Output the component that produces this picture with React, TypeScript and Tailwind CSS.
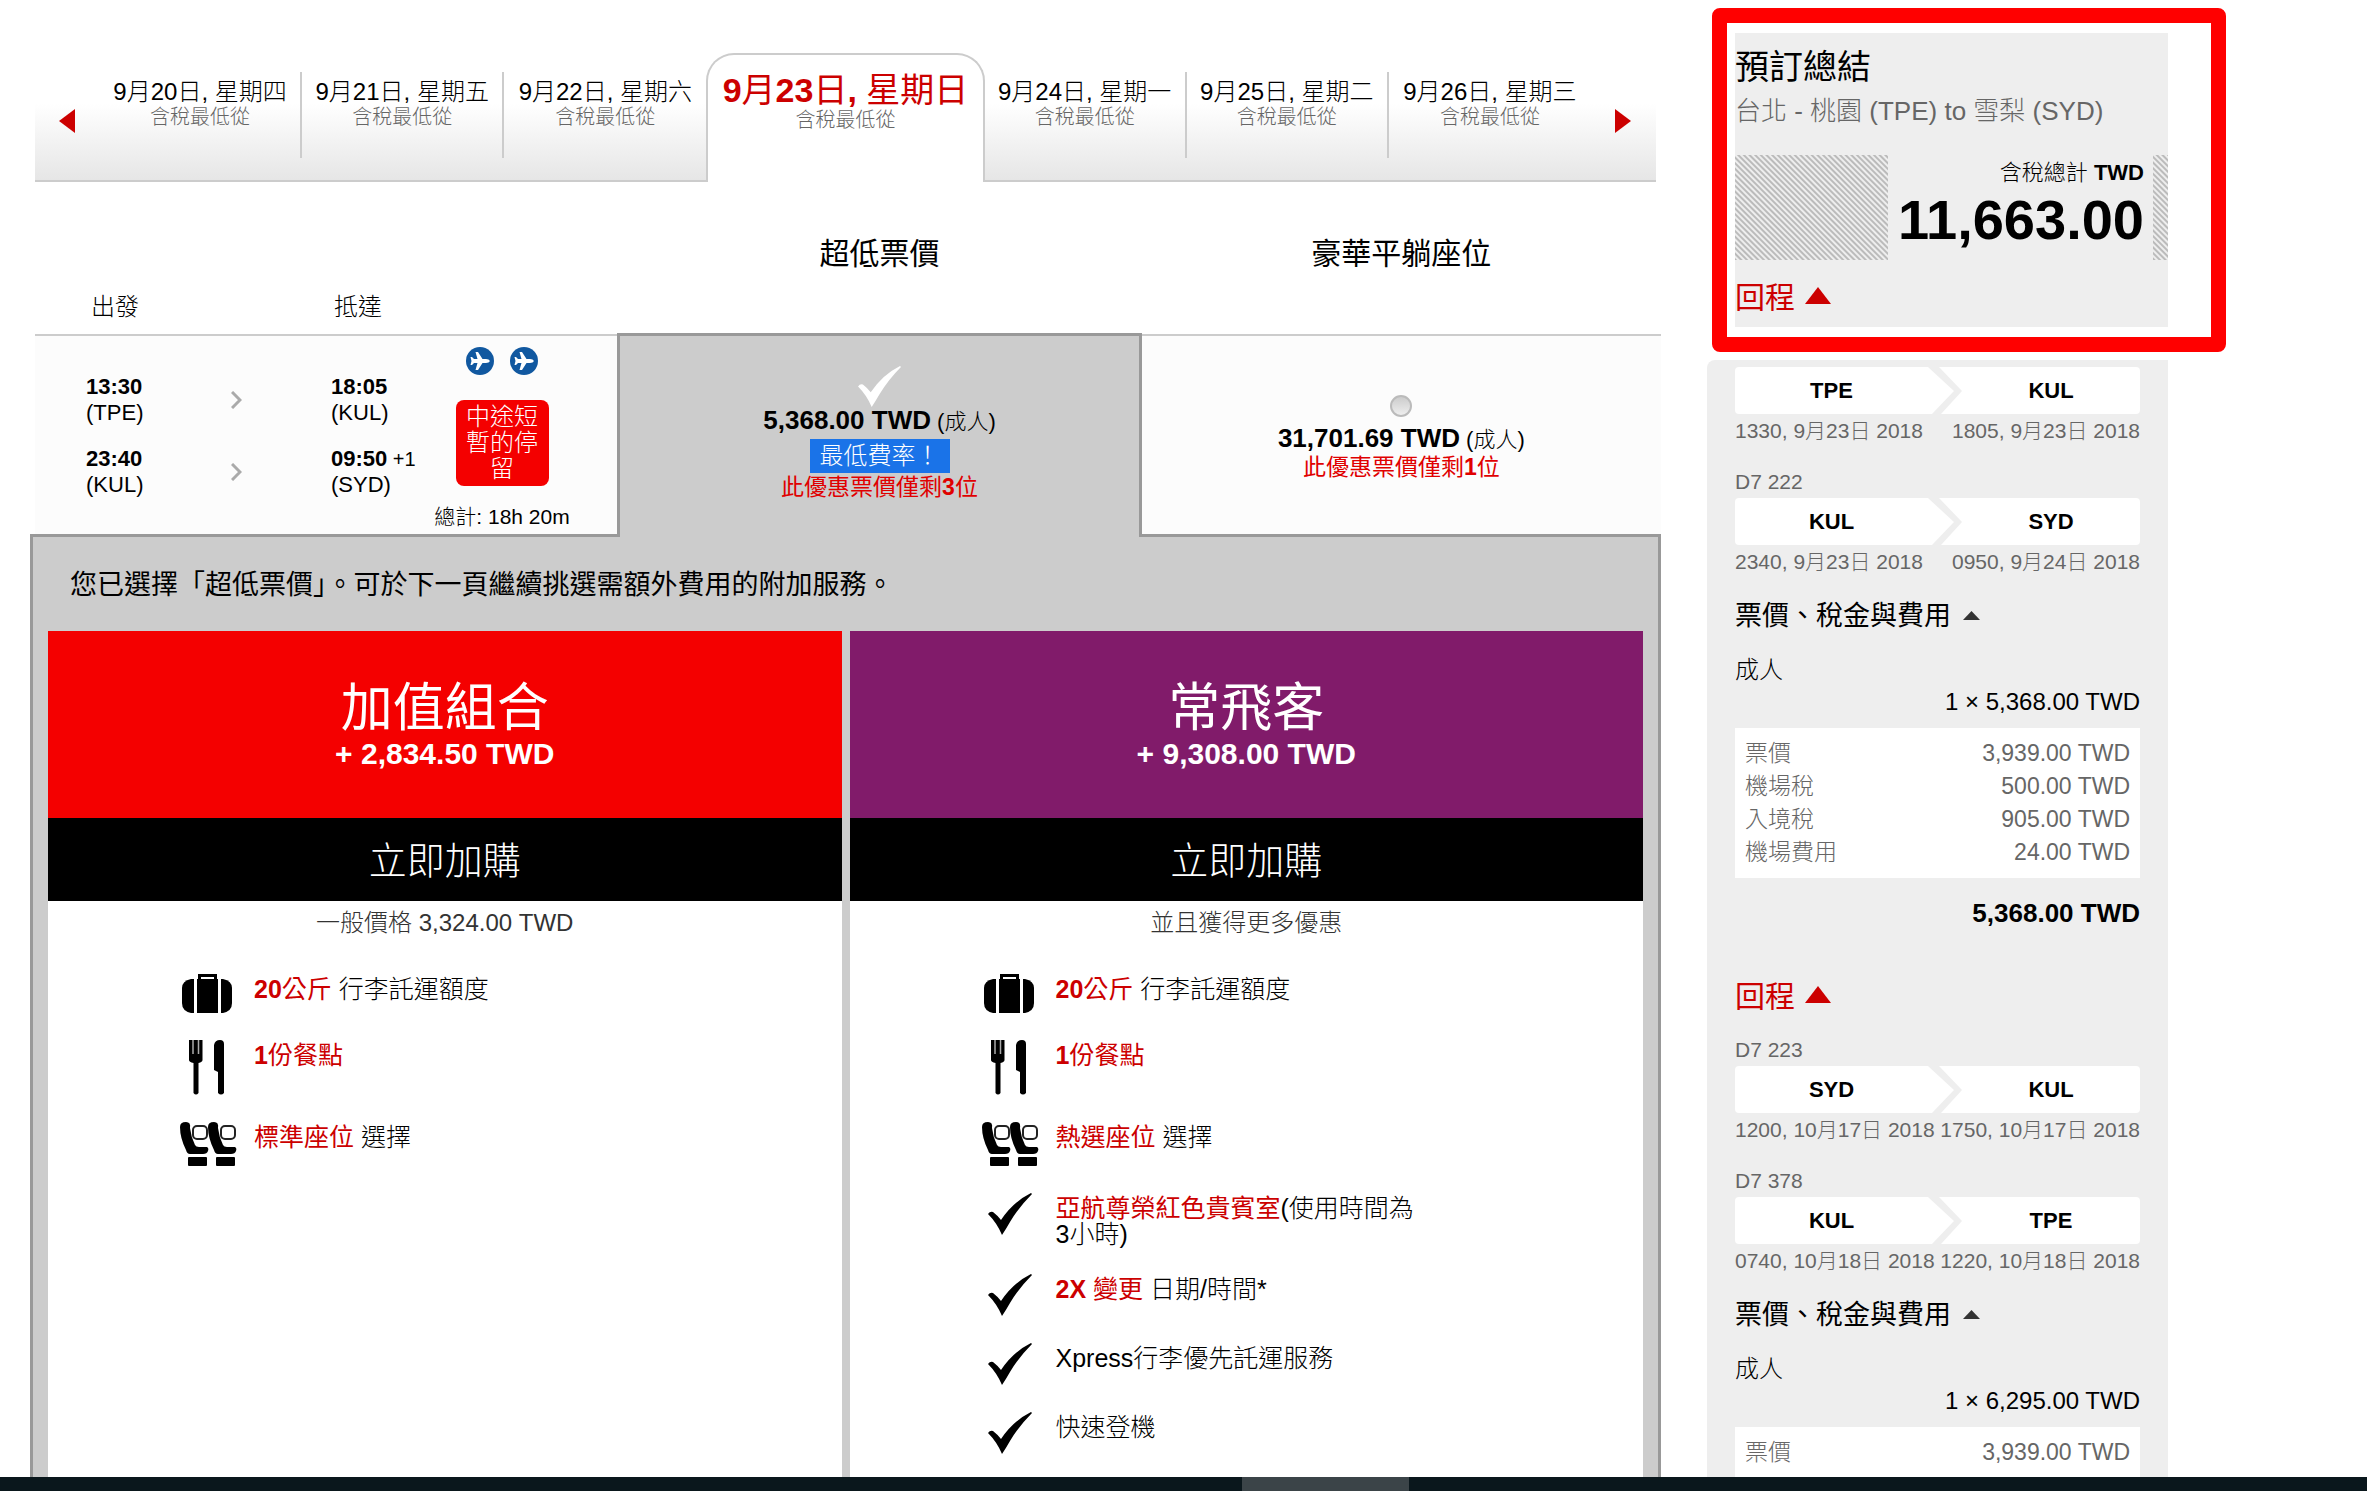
import React, { ReactElement, ReactNode, useState } from 'react'

interface DateTab {
  digits: [string, string]
  weekday: string
}

const dates: DateTab[] = [
  { digits: ['9', '20'], weekday: '星期四' },
  { digits: ['9', '21'], weekday: '星期五' },
  { digits: ['9', '22'], weekday: '星期六' },
  { digits: ['9', '23'], weekday: '星期日' },
  { digits: ['9', '24'], weekday: '星期一' },
  { digits: ['9', '25'], weekday: '星期二' },
  { digits: ['9', '26'], weekday: '星期三' },
]

function CheckIcon({ className }: { className: string }): ReactElement {
  return (
    <svg viewBox="0 0 44 42" className={className} aria-hidden="true">
      <path
        d="M0 21 Q2 18 5 19 Q9 22 13 27 Q25 9 43 0 L44 1 Q31 14 22 29 Q18 36 14 42 Q9 30 0 21 Z"
        fill="currentColor"
      />
    </svg>
  )
}

function LuggageIcon(): ReactElement {
  return (
    <svg viewBox="0 0 50 39" className="h-[39px] w-[50px]" aria-hidden="true">
      <path d="M17.5 6 V1.5 H33.5 V6" fill="none" stroke="#000" strokeWidth="3" />
      <rect x="15" y="5" width="21" height="34" />
      <path d="M12 5 V39 H9 Q0 37 0 29 V14 Q0 7 9 5 Z" />
      <path d="M39 5 V39 H41 Q50 37 50 29 V14 Q50 7 41 5 Z" />
    </svg>
  )
}

function MealIcon(): ReactElement {
  return (
    <svg viewBox="0 0 50 55" className="h-[55px] w-[50px]" aria-hidden="true">
      <path d="M7 0 H20.500 V20 Q20.500 22 16.500 23 V53 Q14 56 11.500 53 V23 Q7 22 7 20 Z" />
      <path d="M11 0 V14 M16.500 0 V14" stroke="#aaa" strokeWidth="1.500" />
      <path d="M32 30 V5 Q33 0 38 0 Q42 0 42 4 V53 Q39 56 36 53 V32 Z" />
    </svg>
  )
}

function SeatShape({ x }: { x: number }): ReactElement {
  return (
    <g transform={`translate(${x} 0)`}>
      <path d="M0 5 Q0 0 6 0 Q11 0 10 6 Q11 15 15 23 Q16 25 19 25 H27 Q29 26 28 29 Q27 32 23 32 H10 Q7 32 6 28 Q0 16 0 5 Z" />
      <rect x="13" y="4" width="14" height="13" rx="4" fill="none" stroke="#222" strokeWidth="2" />
      <rect x="8" y="35" width="19" height="9" rx="1" />
    </g>
  )
}

function SeatIcon(): ReactElement {
  return (
    <svg viewBox="0 0 57 44" className="-ml-0.5 h-[44px] w-[57px]" aria-hidden="true">
      <SeatShape x={0} />
      <SeatShape x={28} />
    </svg>
  )
}

function PlaneIcon(): ReactElement {
  return (
    <svg viewBox="0 0 28 28" className="size-7" aria-hidden="true">
      <circle cx="14" cy="14" r="14" fill="#1158a0" />
      <path
        d="M24 14 Q23 12 20 12 H16.500 L12 5 H9.500 L11.500 12 H8 L6 10 H4.500 L5.500 14 L4.500 18 H6 L8 16 H11.500 L9.500 23 H12 L16.500 16 H20 Q23 16 24 14 Z"
        fill="#fff"
      />
    </svg>
  )
}

function Triangle({ className }: { className: string }): ReactElement {
  return (
    <svg viewBox="0 0 26 17" preserveAspectRatio="none" className={className} aria-hidden="true">
      <path d="M13 0 L26 17 H0 Z" fill="currentColor" />
    </svg>
  )
}

function DateBar(): ReactElement {
  const active = 3
  const gradient = 'border-b-2 border-[#ccc] bg-linear-to-b from-white from-40% to-[#e6e6e6]'
  return (
    <nav className="mx-[5px] grid h-[129px] grid-cols-[65px_202fr_202fr_202fr_278fr_202fr_202fr_202fr_65px]">
      <button className={`flex items-center pt-2 pl-6 ${gradient}`} aria-label="前一天">
        <svg viewBox="0 0 16 24" className="h-6 w-4">
          <path d="M16 0 V24 L0 12 Z" fill="#c00" />
        </svg>
      </button>
      {dates.map((d: DateTab, i: number) =>
        i === active ? (
          <button
            key={d.weekday}
            className="flex flex-col items-center rounded-t-[28px] border-x-2 border-t-2 border-[#ccc] bg-white pt-[15px] whitespace-nowrap"
          >
            <span className="text-[34px] leading-[40px] text-[#c00]">
              <b>{d.digits[0]}</b>月<b>{d.digits[1]}</b>日<b>,</b> {d.weekday}
            </span>
            <span className="text-[20px] leading-[20px] font-light text-[#666]">含稅最低從</span>
          </button>
        ) : (
          <button
            key={d.weekday}
            className={`flex flex-col items-stretch pt-[19px] whitespace-nowrap ${gradient}`}
          >
            <span
              className={`flex h-[86px] flex-col items-center pt-1.5 font-light ${
                i === active - 1 || i === dates.length - 1 ? '' : 'border-r-2 border-[#ccc]'
              }`}
            >
              <span className="text-[24px] leading-[28px]">
                {d.digits[0]}月{d.digits[1]}日, {d.weekday}
              </span>
              <span className="text-[20px] leading-[22px] text-[#666]">含稅最低從</span>
            </span>
          </button>
        )
      )}
      <button className={`flex items-center pt-2 pl-6 ${gradient}`} aria-label="後一天">
        <svg viewBox="0 0 16 24" className="h-6 w-4">
          <path d="M0 0 V24 L16 12 Z" fill="#c00" />
        </svg>
      </button>
    </nav>
  )
}

interface StopProps {
  time: string
  airport: string
  nextDay?: boolean
}
function Stop({ time, airport, nextDay }: StopProps): ReactElement {
  return (
    <div className="text-[22px] leading-[26px] whitespace-nowrap">
      <b>{time}</b>
      {nextDay && <span className="text-[20px]"> +1</span>}
      <div>({airport})</div>
    </div>
  )
}

function Chevron(): ReactElement {
  return (
    <svg viewBox="0 0 11 18" className="h-[18px] w-[11px]" aria-hidden="true">
      <path d="M1 1 L9 9 L1 17" fill="none" stroke="#aaa" strokeWidth="3" />
    </svg>
  )
}

interface FareProps {
  price: string
  seats: number
  lowest?: boolean
  checked: boolean
  onSelect: () => void
}
function Fare({ price, seats, lowest, checked, onSelect }: FareProps): ReactElement {
  return (
    <label
      className={`relative flex flex-col items-center ${
        checked
          ? 'z-10 -mb-[3px] border-x-3 border-t-3 border-[#999] bg-[#ccc] pt-[30px]'
          : 'mt-px border-t-2 border-[#ccc] bg-[#fcfcfc] pt-[59px]'
      }`}
    >
      <input
        type="radio"
        name="fare"
        checked={checked}
        onChange={onSelect}
        className={
          checked
            ? 'sr-only'
            : 'mb-2 size-[22px] appearance-none rounded-full border-2 border-[#bbb] bg-linear-to-b from-[#ccc] to-[#eee]'
        }
      />
      {checked && <CheckIcon className="h-[41px] w-[43px] text-white" />}
      <span className="text-[22px] leading-[26px] font-light">
        <b className="text-[26px] font-bold">{price} TWD</b> (成人)
      </span>
      {lowest && (
        <span className="mt-1 bg-[#1a73e8] px-2.5 text-[24px] leading-[34px] font-light text-white">
          最低費率！
        </span>
      )}
      <span className="mt-px text-[23px] leading-[26px] text-[#e00000]">
        此優惠票價僅剩<b>{seats}</b>位
      </span>
    </label>
  )
}

function Flights(): ReactElement {
  const [fare, setFare] = useState<string>('low')
  return (
    <div>
      <div className="grid h-[151px] grid-cols-[587fr_524fr_519fr]">
        <div className="flex items-end pb-3 pl-[61px] text-[24px] leading-[28px] font-light">
          <span className="w-[243px]">出發</span>
          <span>抵達</span>
        </div>
        <h2 className="pt-[52px] text-center text-[30px] leading-[40px]">超低票價</h2>
        <h2 className="pt-[52px] text-center text-[30px] leading-[40px]">豪華平躺座位</h2>
      </div>
      <div className="grid h-[201px] grid-cols-[587fr_524fr_519fr]">
        <div className="mt-px ml-[5px] flex border-t-2 border-[#ccc] bg-[#fcfcfc] pl-[51px]">
          <div className="grid h-fit grid-cols-[145px_100px_110px] items-center gap-y-5 pt-[38px]">
            <Stop time="13:30" airport="TPE" />
            <Chevron />
            <Stop time="18:05" airport="KUL" />
            <Stop time="23:40" airport="KUL" />
            <Chevron />
            <Stop time="09:50" airport="SYD" nextDay />
          </div>
          <div className="flex w-[122px] flex-col items-center pt-[11px]">
            <div className="flex gap-4">
              <PlaneIcon />
              <PlaneIcon />
            </div>
            <div className="mt-[25px] w-[93px] rounded-lg bg-[#f40000] px-2.5 py-1 text-center text-[24px] leading-[26px] font-light text-white">
              中途短暫的停留
            </div>
            <div className="mt-[18px] text-[21px] leading-[26px] font-light whitespace-nowrap">
              總計: 18h 20m
            </div>
          </div>
        </div>
        <Fare
          price="5,368.00"
          seats={3}
          lowest
          checked={fare === 'low'}
          onSelect={() => setFare('low')}
        />
        <Fare
          price="31,701.69"
          seats={1}
          checked={fare === 'premium'}
          onSelect={() => setFare('premium')}
        />
      </div>
    </div>
  )
}

interface BundleProps {
  title: string
  price: string
  color: string
  note: string
  children: ReactNode
}
function Bundle({ title, price, color, note, children }: BundleProps): ReactElement {
  return (
    <section className="flex-1 bg-white">
      <div className={`h-[187px] pt-[49px] text-center text-white ${color}`}>
        <h3 className="text-[52px] leading-[56px]">{title}</h3>
        <div className="text-[30px] leading-[36px] font-bold">+ {price} TWD</div>
      </div>
      <button className="h-[83px] w-full bg-black pt-0.5 text-[38px] leading-[48px] font-light text-white">
        立即加購
      </button>
      <p className="pt-2 text-center text-[24px] leading-[28px] font-light text-[#333]">{note}</p>
      <ul className="mt-[37px] flex flex-col gap-[27px] pl-[134px]">{children}</ul>
    </section>
  )
}

function Perk({ icon, children }: { icon: ReactNode; children: ReactNode }): ReactElement {
  return (
    <li className="flex items-start">
      <div className="w-[72px] shrink-0">{icon}</div>
      <div className="w-[368px] pt-0.5 text-[25px] leading-[26px] font-light">{children}</div>
    </li>
  )
}

function Red({ children }: { children: ReactNode }): ReactElement {
  return <span className="font-normal text-[#c00]">{children}</span>
}

function Bundles(): ReactElement {
  const check = <CheckIcon className="ml-1 h-[42px] w-[44px] text-black" />
  return (
    <div className="flex flex-1 flex-col border-3 border-b-0 border-[#999] bg-[#ccc] px-[15px]">
      <p className="pt-7 pb-[26px] pl-[22px] text-[27px] leading-[40px]">
        您已選擇「超低票價」。可於下一頁繼續挑選需額外費用的附加服務。
      </p>
      <div className="flex flex-1 gap-2">
        <Bundle title="加值組合" price="2,834.50" color="bg-[#f40000]" note="一般價格 3,324.00 TWD">
          <Perk icon={<LuggageIcon />}>
            <Red>
              <b>20</b>公斤
            </Red>{' '}
            行李託運額度
          </Perk>
          <Perk icon={<MealIcon />}>
            <Red>
              <b>1</b>份餐點
            </Red>
          </Perk>
          <Perk icon={<SeatIcon />}>
            <Red>標準座位</Red> 選擇
          </Perk>
        </Bundle>
        <Bundle title="常飛客" price="9,308.00" color="bg-[#811b6a]" note="並且獲得更多優惠">
          <Perk icon={<LuggageIcon />}>
            <Red>
              <b>20</b>公斤
            </Red>{' '}
            行李託運額度
          </Perk>
          <Perk icon={<MealIcon />}>
            <Red>
              <b>1</b>份餐點
            </Red>
          </Perk>
          <Perk icon={<SeatIcon />}>
            <Red>熱選座位</Red> 選擇
          </Perk>
          <Perk icon={check}>
            <Red>亞航尊榮紅色貴賓室</Red>(使用時間為3小時)
          </Perk>
          <Perk icon={check}>
            <Red>
              <b>2X</b> 變更
            </Red>{' '}
            日期/時間*
          </Perk>
          <Perk icon={check}>Xpress行李優先託運服務</Perk>
          <Perk icon={check}>快速登機</Perk>
        </Bundle>
      </div>
    </div>
  )
}

interface LegProps {
  flight?: string
  from: string
  to: string
  departs: string
  arrives: string
}
function Leg({ flight, from, to, departs, arrives }: LegProps): ReactElement {
  return (
    <div className="text-[21px] leading-[26px] font-light text-[#666]">
      {flight && <div className="mb-[3px]">{flight}</div>}
      <div className="flex h-[47px] items-center rounded bg-white text-[22px] font-bold text-black">
        <span className="w-[193px] text-center">{from}</span>
        <svg viewBox="0 0 34 47" className="h-[47px] w-[34px]" aria-hidden="true">
          <path d="M0 0 H11 L34 24 L13 47 H4 L26 24 Z" fill="#eee" />
        </svg>
        <span className="flex-1 text-center">{to}</span>
      </div>
      <div className="mt-1 flex justify-between whitespace-nowrap">
        <span>{departs}</span>
        <span>{arrives}</span>
      </div>
    </div>
  )
}

interface FeesProps {
  price: string
  rows: [string, string][]
}
function Fees({ price, rows }: FeesProps): ReactElement {
  return (
    <div className="font-light">
      <button className="mt-[23px] flex items-center gap-3 text-[27px] leading-[36px] font-normal">
        票價、稅金與費用
        <Triangle className="mb-0.5 h-[9px] w-[17px] text-[#333]" />
      </button>
      <div className="mt-[21px] text-[24px] leading-[30px]">成人</div>
      <div className="mt-0.5 text-right text-[24px] leading-[30px]">1 × {price} TWD</div>
      <div className="mt-[11px] bg-white px-2.5 py-[9px]">
        <table className="w-full text-[23px] leading-[33px] text-[#666]">
          <tbody>
            {rows.map(([name, amount]) => (
              <tr key={name}>
                <th scope="row" className="text-left font-light">
                  {name}
                </th>
                <td className="text-right">{amount} TWD</td>
              </tr>
            ))}
          </tbody>
        </table>
      </div>
    </div>
  )
}

function ReturnToggle(): ReactElement {
  return (
    <button className="flex items-center gap-2.5 text-[30px] leading-[40px] text-[#c00]">
      回程
      <Triangle className="mb-1.5 h-[17px] w-[26px]" />
    </button>
  )
}

function Summary(): ReactElement {
  return (
    <aside className="flex w-[521px] shrink-0 flex-col pt-2">
      <div className="ml-[5px] w-[514px] rounded-lg border-15 border-[#f00] py-2.5 pr-[43px] pl-2">
        <div className="bg-[#eee] pt-3 pb-[9px]">
          <h2 className="text-[34px] leading-[44px]">預訂總結</h2>
          <p className="mt-1.5 text-[26px] leading-[32px] font-light whitespace-nowrap text-[#666]">
            台北 - 桃園 (TPE) to 雪梨 (SYD)
          </p>
          <div className="mt-7 flex h-[105px] justify-end bg-[repeating-linear-gradient(45deg,#bbb_0_1px,#eee_2px_3px,#bbb_4px)] pr-[15px]">
            <div className="w-[265px] bg-[#eee] pt-1 pr-[9px] text-right whitespace-nowrap">
              <div className="text-[22px] leading-[28px] font-light">
                含稅總計 <b className="font-bold">TWD</b>
              </div>
              <div className="mt-[3px] text-[56px] leading-[60px] font-bold">11,663.00</div>
            </div>
          </div>
          <div className="mt-[18px]">
            <ReturnToggle />
          </div>
        </div>
      </div>
      <div className="mt-2 w-[461px] flex-1 rounded-tl-lg bg-[#eee] pt-[7px] pr-7 pl-7">
        <Leg from="TPE" to="KUL" departs="1330, 9月23日 2018" arrives="1805, 9月23日 2018" />
        <div className="mt-[25px]">
          <Leg
            flight="D7 222"
            from="KUL"
            to="SYD"
            departs="2340, 9月23日 2018"
            arrives="0950, 9月24日 2018"
          />
        </div>
        <Fees
          price="5,368.00"
          rows={[
            ['票價', '3,939.00'],
            ['機場稅', '500.00'],
            ['入境稅', '905.00'],
            ['機場費用', '24.00'],
          ]}
        />
        <div className="mt-[18px] text-right text-[26px] leading-[34px] font-bold">
          5,368.00 TWD
        </div>
        <div className="mt-[47px] mb-5">
          <ReturnToggle />
        </div>
        <Leg
          flight="D7 223"
          from="SYD"
          to="KUL"
          departs="1200, 10月17日 2018"
          arrives="1750, 10月17日 2018"
        />
        <div className="mt-[25px]">
          <Leg
            flight="D7 378"
            from="KUL"
            to="TPE"
            departs="0740, 10月18日 2018"
            arrives="1220, 10月18日 2018"
          />
        </div>
        <Fees price="6,295.00" rows={[['票價', '3,939.00']]} />
      </div>
    </aside>
  )
}

export default function App(): ReactElement {
  return (
    <div
      lang="zh-TW"
      className="flex h-screen flex-col bg-white [font-family:'Liberation_Sans','Noto_Sans_CJK_TC',sans-serif] text-black"
    >
      <div className="flex min-h-0 flex-1 gap-[46px] overflow-hidden pr-[139px] pl-[30px]">
        <main className="flex flex-1 flex-col pt-[53px]">
          <DateBar />
          <Flights />
          <Bundles />
        </main>
        <Summary />
      </div>
      <footer className="grid h-3.5 shrink-0 grid-cols-[1242fr_167fr_958fr] bg-[#0a171c]">
        <div className="col-start-2 bg-[#3b4448]" />
      </footer>
    </div>
  )
}
